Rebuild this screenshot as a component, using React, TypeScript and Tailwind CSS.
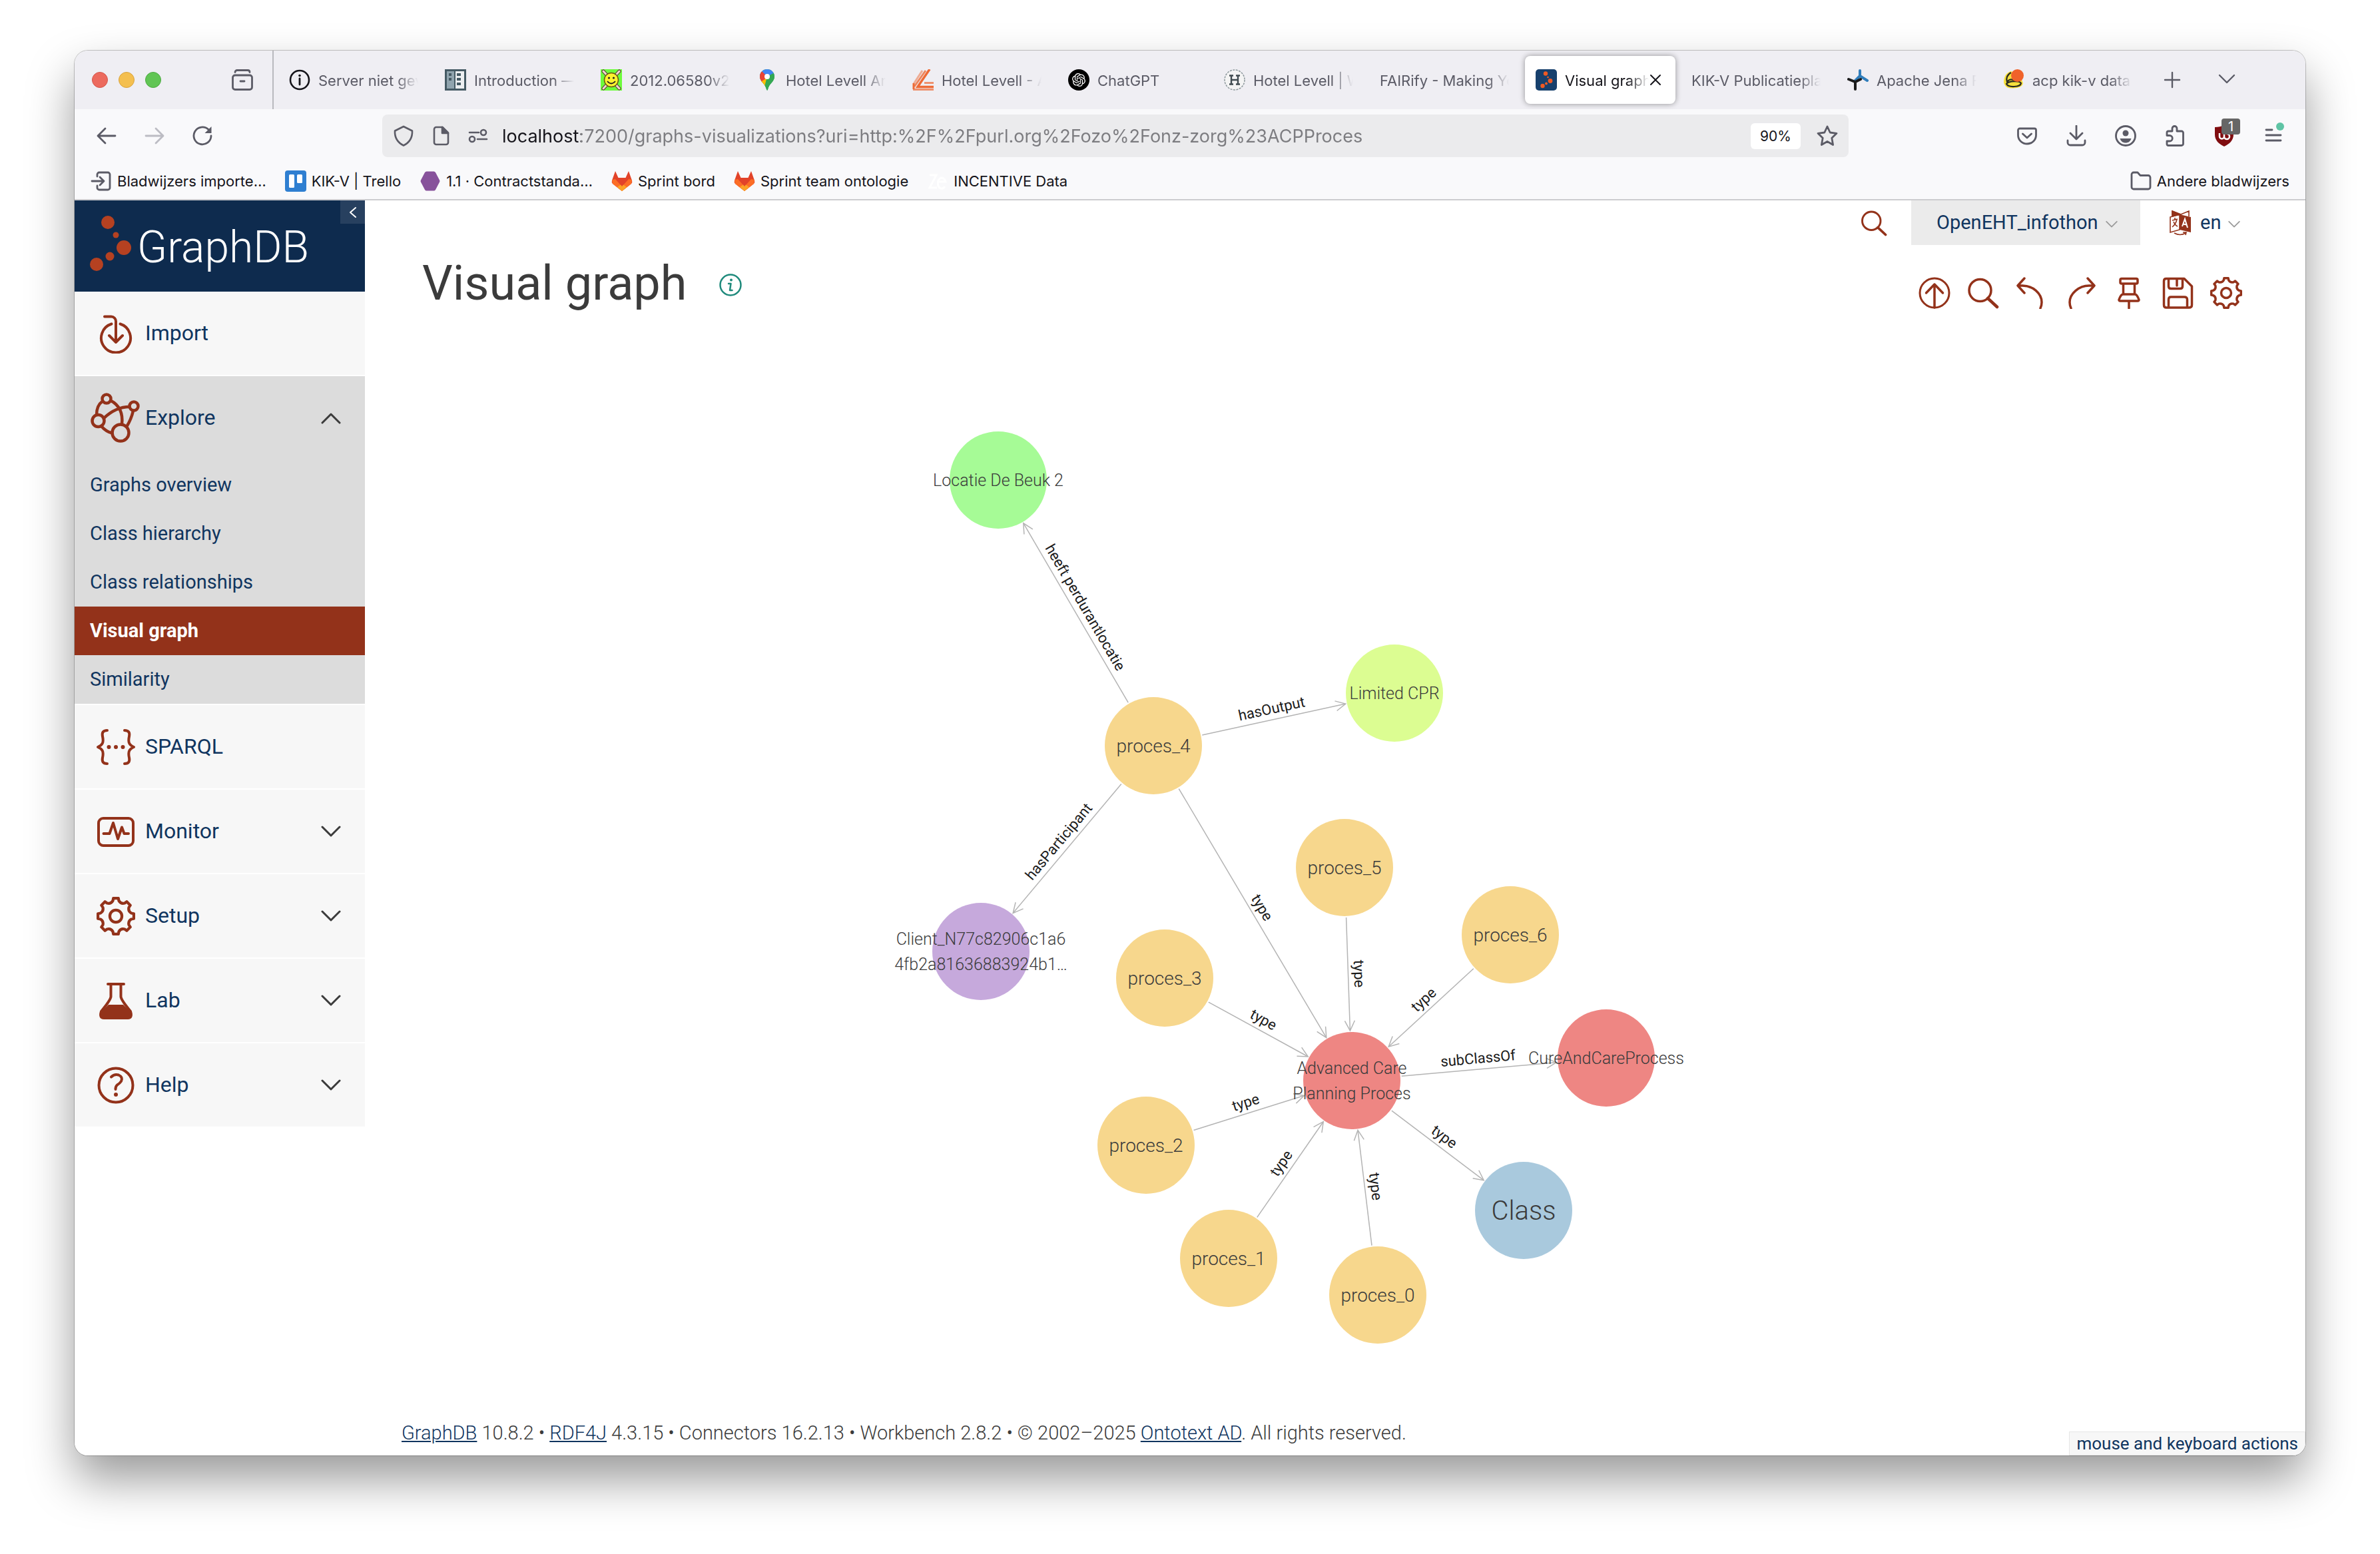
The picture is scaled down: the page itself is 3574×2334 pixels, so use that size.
import React from 'react';
import { SiOpenai } from 'react-icons/si';

type Children = { children: React.ReactNode };

/* ---------- Icon helpers ---------- */

const RUST = '#93321a';

function Stroke({ size = 'size-8', box = '0 0 32 32', width = 3, className = '', children }: Children & { size?: string; box?: string; width?: number; className?: string }) {
  return (
    <svg aria-hidden="true" viewBox={box} className={`${size} shrink-0 ${className}`} fill="none" stroke="currentColor" strokeWidth={width} strokeLinecap="round" strokeLinejoin="round">
      {children}
    </svg>
  );
}

function Chevron({ up = false, className }: { up?: boolean; className: string }) {
  return (
    <svg aria-hidden="true" viewBox="0 0 30 18" className={`shrink-0 ${className}`} fill="none" stroke="currentColor" strokeWidth="3" strokeLinecap="round" strokeLinejoin="round">
      <path d={up ? 'M2 16L15 3L28 16' : 'M2 2L15 15L28 2'} />
    </svg>
  );
}

function polar(r: number, deg: number) {
  const a = (deg * Math.PI) / 180;
  return `${(24 + r * Math.cos(a)).toFixed(2)} ${(24 + r * Math.sin(a)).toFixed(2)}`;
}

const gearPath =
  Array.from({ length: 8 }, (_, i) => {
    const a = i * 45;
    return `${i === 0 ? 'M' : 'L'}${polar(19.5, a - 11)}L${polar(22.5, a - 8)}L${polar(22.5, a + 8)}L${polar(19.5, a + 11)}A6.5 6.5 0 0 0 ${polar(19.5, a + 34)}`;
  }).join('') + 'Z';

function Gear({ size }: { size: string }) {
  return (
    <Stroke size={size} box="0 0 48 48" width={3.5}>
      <path d={gearPath} />
      <circle cx="24" cy="24" r="7.5" />
    </Stroke>
  );
}

/* ---------- Tab favicons ---------- */

const InfoFav = (
  <svg viewBox="0 0 32 32" className="size-8">
    <circle cx="16" cy="16" r="14" fill="none" stroke="#15141a" strokeWidth="2.6" />
    <path d="M16 14V23" stroke="#15141a" strokeWidth="2.8" strokeLinecap="round" />
    <circle cx="16" cy="9.5" r="1.8" fill="#15141a" />
  </svg>
);

const BuildingFav = (
  <svg viewBox="0 0 32 32" className="size-8">
    <rect width="32" height="32" fill="#455a64" />
    <rect x="3" y="3" width="11" height="26" fill="#90a4ae" />
    <rect x="16" y="3" width="13" height="26" fill="#eceff1" />
    <g fill="#455a64">
      <rect x="6" y="6" width="4" height="4" />
      <rect x="6" y="13" width="4" height="4" />
      <rect x="18" y="6" width="6" height="4" />
      <rect x="18" y="13" width="6" height="4" />
      <rect x="18" y="20" width="6" height="4" />
    </g>
  </svg>
);

const SmileyFav = (
  <svg viewBox="0 0 32 32" className="size-8">
    <rect width="32" height="32" fill="#6dfb3c" />
    <path d="M4 3L28 29M28 3L4 29" stroke="#5a3a30" strokeWidth="5" strokeLinecap="round" />
    <path d="M4 3L28 29M28 3L4 29" stroke="#f0d9cf" strokeWidth="3" strokeLinecap="round" />
    <circle cx="16" cy="16" r="10.5" fill="#fdf32f" stroke="#6b5a12" strokeWidth="1.5" />
    <circle cx="12.5" cy="13" r="1.6" fill="#222" />
    <circle cx="19.5" cy="13" r="1.6" fill="#222" />
    <path d="M10 18Q16 25 22 18" fill="none" stroke="#222" strokeWidth="1.8" />
  </svg>
);

const MapsFav = (
  <svg viewBox="0 0 32 32" className="size-8">
    <clipPath id="pin">
      <path d="M16 0C9.800 0 5 4.900 5 11C5 19 13 21 15 30.500Q16 33 17 30.500C19 21 27 19 27 11C27 4.900 22.200 0 16 0Z" />
    </clipPath>
    <g clipPath="url(#pin)">
      <rect width="32" height="34" fill="#34a853" />
      <path d="M0 0H32V4L16 18L4 8Z" fill="#4285f4" />
      <path d="M8 3L16 11L6 22L0 16V6Z" fill="#ea4335" />
      <path d="M14 14L24 10L12 28L5 20Z" fill="#fbbc04" />
      <path d="M27 5L16 11L12 26L18 34L32 20Z" fill="#34a853" />
    </g>
    <circle cx="16" cy="11" r="4" fill="#fff" />
  </svg>
);

const LevellFav = (
  <svg viewBox="0 0 32 32" className="size-8" fill="none" stroke="#ee6a35">
    <path d="M15 2L2 22" strokeWidth="3" opacity=".5" />
    <path d="M20 2L3 26" strokeWidth="3" opacity=".8" />
    <path d="M26 0L8 26.500H32" strokeWidth="3.500" />
    <path d="M18 20.500H32" strokeWidth="3" opacity=".7" />
    <path d="M1 30.500H32" strokeWidth="3" opacity=".7" />
    <path d="M2 21V30" strokeWidth="3" />
  </svg>
);

const ChatFav = (
  <span className="grid size-8 place-items-center rounded-full bg-black text-white">
    <SiOpenai className="size-5" />
  </span>
);

const HFav = (
  <svg viewBox="0 0 32 32" className="size-8">
    <circle cx="16" cy="16" r="15" fill="#f4f4f4" stroke="#8d989c" strokeWidth="1.500" strokeDasharray="3 1.500" />
    <path d="M8 9.500H14M18 9.500H24M8 22.500H14M18 22.500H24M11 10V22M21 10V22M11 16H21" stroke="#3f4a4f" strokeWidth="2.400" fill="none" />
  </svg>
);

const GraphFav = (
  <svg viewBox="0 0 32 32" className="size-8">
    <rect width="32" height="32" rx="5" fill="#17406d" />
    <g fill="#ef5a24">
      <circle cx="15" cy="6.500" r="3.200" />
      <circle cx="18.500" cy="12" r="1.300" />
      <circle cx="22" cy="17.500" r="3.400" />
      <circle cx="16" cy="21.500" r="1.900" />
      <circle cx="10.500" cy="25" r="3.200" />
    </g>
  </svg>
);

const JenaFav = (
  <svg viewBox="0 0 32 32" className="size-8" fill="none" strokeLinecap="round">
    <path d="M19 2V9M19 10L12 17M19 10L30 17" stroke="#2f7dbb" strokeWidth="4" />
    <path d="M2 15L12 19L20 15M12 19V30" stroke="#1b1b1b" strokeWidth="4" />
  </svg>
);

const AcpFav = (
  <svg viewBox="0 0 32 32" className="size-8">
    <path d="M12 3C4 5 1 12 1 20C3 28 9 29 16 28.500C24 28 29 26 30 21L26 10Z" fill="#f7e03c" />
    <path d="M12 5C6 8 4 14 6 19C10 14 15 14 18 19M5 22C9 17 25 17 27 21C26 27 8 28 5 22Z" fill="none" stroke="#2b2b20" strokeWidth="2.200" />
    <circle cx="21.500" cy="9.500" r="9.500" fill="#f0622a" />
  </svg>
);

const tabs: { title: string; icon?: React.ReactNode; active?: boolean }[] = [
  { title: 'Server niet gev', icon: InfoFav },
  { title: 'Introduction —', icon: BuildingFav },
  { title: '2012.06580v2', icon: SmileyFav },
  { title: 'Hotel Levell Am', icon: MapsFav },
  { title: 'Hotel Levell - A', icon: LevellFav },
  { title: 'ChatGPT', icon: ChatFav },
  { title: 'Hotel Levell | W', icon: HFav },
  { title: 'FAIRify - Making Yo' },
  { title: 'Visual graph', icon: GraphFav, active: true },
  { title: 'KIK-V Publicatiepla' },
  { title: 'Apache Jena F', icon: JenaFav },
  { title: 'acp kik-v data', icon: AcpFav },
];

function TabStrip() {
  return (
    <div className="flex h-[88px] items-center bg-[#efeef3] text-[#5b5b66]">
      <div className="flex h-full w-[299px] shrink-0 items-center border-r-2 border-[#b9b9be] pl-[26px]">
        <div className="flex gap-4">
          <button aria-label="Close window" className="size-6 rounded-full border border-[#d5564a] bg-[#ec6a5e]" />
          <button aria-label="Minimise window" className="size-6 rounded-full border border-[#d9a33d] bg-[#f4bf4f]" />
          <button aria-label="Zoom window" className="size-6 rounded-full border border-[#4caa41] bg-[#61c554]" />
        </div>
        <button aria-label="Recent tabs" className="ml-[106px]">
          <Stroke width={2.8}>
            <path d="M5 4.500C5 2.500 6.500 1.500 8 1.500H24C25.500 1.500 27 2.500 27 4.500M13 18H19" />
            <rect x="1.500" y="9" width="29" height="21.500" rx="3.500" />
          </Stroke>
        </button>
      </div>
      <nav aria-label="Tabs" className="ml-[7px] flex min-w-0 gap-2 text-[22px]">
        {tabs.map((t) => (
          <button
            key={t.title}
            className={
              t.active
                ? 'flex h-[72px] w-[226px] min-w-0 items-center rounded-lg bg-white px-4 text-left text-[#15141a] shadow-[0_0_8px_rgba(0,0,0,0.4)]'
                : 'flex h-[72px] w-[226px] min-w-0 items-center px-4 text-left'
            }
          >
            {t.icon && <span className="mr-3 shrink-0">{t.icon}</span>}
            <span className="min-w-0 flex-1 overflow-hidden whitespace-nowrap pt-0.5 leading-8 [mask-image:linear-gradient(90deg,#000_calc(100%-32px),transparent)]">{t.title}</span>
            {t.active && (
              <Stroke size="size-5" box="0 0 20 20" width={2} className="mr-1">
                <path d="M3 3L17 17M17 3L3 17" />
              </Stroke>
            )}
          </button>
        ))}
      </nav>
      <button aria-label="New tab" className="ml-[30px]">
        <Stroke size="size-7" box="0 0 28 28" width={2.4}>
          <path d="M14 3V25M3 14H25" />
        </Stroke>
      </button>
      <button aria-label="List all tabs" className="ml-[54px]">
        <Stroke size="size-7" box="0 0 28 28" width={2.4}>
          <path d="M3 7L14 18L25 7" />
        </Stroke>
      </button>
    </div>
  );
}

function NavBar() {
  return (
    <div className="flex h-20 items-center bg-[#f9f9fb] text-[#5b5b66]">
      <div className="flex w-[462px] shrink-0 gap-10 pl-8">
        <button aria-label="Back">
          <Stroke width={2.8}>
            <path d="M29 16H3M14 5L3 16L14 27" />
          </Stroke>
        </button>
        <button aria-label="Forward" disabled className="text-[#bcbcc3]">
          <Stroke width={2.8}>
            <path d="M3 16H29M18 5L29 16L18 27" />
          </Stroke>
        </button>
        <button aria-label="Reload">
          <Stroke width={2.8}>
            <path d="M29 16A13 13 0 1 1 25 6.500" />
            <path d="M29.500 2V12H19.500Z" fill="currentColor" stroke="none" />
          </Stroke>
        </button>
      </div>
      <div className="flex h-16 w-[2202px] items-center rounded-lg bg-[#ebebed] pl-4 pr-4">
        <Stroke width={2.6}>
          <path d="M16 2L29 8.500C29.500 18 25 26 16 30.500C7 26 2.500 18 3 8.500Z" />
        </Stroke>
        <Stroke className="ml-6" width={2.6}>
          <path d="M9 3H18.500L27 11.500V26A3 3 0 0 1 24 29H9A3 3 0 0 1 6 26V6A3 3 0 0 1 9 3Z" />
          <path d="M18 3V12H27Z" fill="currentColor" />
        </Stroke>
        <Stroke className="ml-6" width={2.6}>
          <path d="M3 11H17M15 21H29" />
          <circle cx="24" cy="11" r="4" />
          <circle cx="7" cy="21" r="4" />
        </Stroke>
        <input
          aria-label="Address"
          readOnly
          value="localhost:7200/graphs-visualizations?uri=http:%2F%2Fpurl.org%2Fozo%2Fonz-zorg%23ACPProces"
          className="ml-5 min-w-0 flex-1 bg-[linear-gradient(90deg,#15141a_118px,#7c7c80_118px)] bg-clip-text pt-0.5 text-[27px] text-transparent outline-none"
        />
        <button className="rounded-md bg-white px-3.5 text-[21px] leading-[39px] text-[#15141a]">90%</button>
        <button aria-label="Bookmark this page" className="ml-6">
          <Stroke width={2.8}>
            <path d="M16 2L20.200 11L30 12.300L22.800 19.200L24.600 29.500L16 24.500L7.400 29.500L9.200 19.200L2 12.300L11.800 11Z" />
          </Stroke>
        </button>
      </div>
      <div className="ml-auto flex items-center gap-[42px] pr-8">
        <button aria-label="Save to Pocket">
          <Stroke width={2.8}>
            <path d="M5 5H27A2.500 2.500 0 0 1 29.500 7.500V15A13.500 13 0 0 1 2.500 15V7.500A2.500 2.500 0 0 1 5 5ZM9.500 13L16 19L22.500 13" />
          </Stroke>
        </button>
        <button aria-label="Downloads">
          <Stroke width={2.8}>
            <path d="M16 1V20M7 12L16 21L25 12M3 23V26A4 4 0 0 0 7 30H25A4 4 0 0 0 29 26V23" />
          </Stroke>
        </button>
        <button aria-label="Account">
          <Stroke width={2.8}>
            <circle cx="16" cy="16" r="14.500" />
            <circle cx="16" cy="12" r="4.500" fill="currentColor" stroke="none" />
            <path d="M7.500 20H24.500C23 24.500 20 26.500 16 26.500C12 26.500 9 24.500 7.500 20Z" fill="currentColor" stroke="none" />
          </Stroke>
        </button>
        <button aria-label="Extensions">
          <Stroke width={2.8}>
            <path d="M4 14V11A2 2 0 0 1 6 9H12V5A3.500 3.500 0 0 1 19 5V9H26A2.500 2.500 0 0 1 28.500 11.500V28A2.500 2.500 0 0 1 26 30.500H6A2 2 0 0 1 4 28.500V24H8A4 4 0 0 0 8 15.500H4Z" />
          </Stroke>
        </button>
        <button aria-label="Content blocker, 1 request blocked" className="relative">
          <svg viewBox="0 0 32 32" className="size-8">
            <path d="M16 0C12 2 7 3 2 3V14C2 23 8 28 16 32C24 28 30 23 30 14V3C25 3 20 2 16 0Z" fill="#800d10" />
            <path d="M9 12V17A3.500 3.500 0 0 0 16 17V13M16 17A4 4 0 1 0 20 13" fill="none" stroke="#fff" strokeWidth="2.500" />
          </svg>
          <span className="absolute -right-2 -top-2.5 w-7 rounded-sm bg-[#666] text-center text-[20px] leading-6 text-white">1</span>
        </button>
        <button aria-label="Open menu" className="relative">
          <Stroke width={2.8}>
            <path d="M5 7H14M5 15H27M5 23H27" />
          </Stroke>
          <span className="absolute right-0 -top-1 size-3 rounded-full bg-[#5fc4a5]" />
        </button>
      </div>
    </div>
  );
}

function Gitlab() {
  return (
    <svg aria-hidden="true" viewBox="0 0 32 32" className="size-8">
      <path d="M6 1L1 15Q0 18 2 20L16 31L30 20Q32 18 31 15L26 1L21.500 11H10.500Z" fill="#e24329" />
      <path d="M1 14L2 20L16 31L30 20L31 14L26 13L16 24L6 13Z" fill="#fc6d26" />
      <path d="M16 20L9 25L16 31L23 25Z" fill="#fca326" />
      <path d="M6 11L16 24L26 11Z" fill="#e24329" />
    </svg>
  );
}

const bookmarks = [
  {
    label: 'Bladwijzers importe…',
    icon: (
      <Stroke width={2.8} className="text-[#5b5b66]">
        <path d="M10 9V6A3 3 0 0 1 13 3H26A3 3 0 0 1 29 6V26A3 3 0 0 1 26 29H13A3 3 0 0 1 10 26V23M2 16H20M14 10L20 16L14 22" />
      </Stroke>
    ),
  },
  {
    label: 'KIK-V | Trello',
    icon: (
      <svg viewBox="0 0 32 32" className="size-8">
        <rect width="32" height="32" rx="4" fill="#2f7fd1" />
        <rect x="6" y="6" width="8" height="20" rx="1.500" fill="#fff" />
        <rect x="18" y="6" width="8" height="13" rx="1.500" fill="#fff" />
      </svg>
    ),
  },
  {
    label: '1.1 · Contractstanda…',
    icon: (
      <svg viewBox="0 0 32 32" className="size-8">
        <path d="M10.500 1.500H21.500Q23 1.500 24 3L30 14.500Q31 16 30 17.500L24 29Q23 30.500 21.500 30.500H10.500Q9 30.500 8 29L2 17.500Q1 16 2 14.500L8 3Q9 1.500 10.500 1.500Z" fill="#87529b" />
      </svg>
    ),
  },
  { label: 'Sprint bord', icon: <Gitlab /> },
  { label: 'Sprint team ontologie', icon: <Gitlab /> },
  {
    label: 'INCENTIVE Data',
    icon: (
      <svg viewBox="0 0 32 32" className="size-8" fill="none" stroke="#fff" strokeWidth="3">
        <path d="M4 7H14L4 26H15M17 17H28A6 8 0 1 0 27 24" />
      </svg>
    ),
  },
];

function BookmarksBar() {
  return (
    <div className="flex h-[57px] items-center justify-between border-b-2 border-[#cccccf] bg-[#f9f9fb] pl-6 pr-6 text-[22px] text-[#15141a]">
      <div className="flex gap-7">
        {bookmarks.map((b) => (
          <a key={b.label} href="#bookmark" className="flex items-center gap-2 whitespace-nowrap">
            {b.icon}
            <span className="pt-0.5">{b.label}</span>
          </a>
        ))}
      </div>
      <a href="#bookmarks" className="flex items-center gap-2 whitespace-nowrap">
        <Stroke width={2.8} className="text-[#5b5b66]">
          <path d="M5 3H11L15 7.500H27A3 3 0 0 1 30 10.500V25A3 3 0 0 1 27 28H5A3 3 0 0 1 2 25V6A3 3 0 0 1 5 3Z" />
        </Stroke>
        <span className="pt-0.5">Andere bladwijzers</span>
      </a>
    </div>
  );
}

/* ---------- Sidebar ---------- */

const menuIcons: Record<string, React.ReactNode> = {
  Import: (
    <Stroke size="size-[60px]" box="0 0 60 60" width={4}>
      <path d="M13 4.500H23A7 7 0 0 1 30 11.500V43M20 33L30 43L40 33M23.500 15.500A22 22 0 1 0 36.500 15.500" />
    </Stroke>
  ),
  Explore: (
    <Stroke size="size-20" box="0 0 80 80" width={4.500}>
      <circle cx="26" cy="11" r="6.500" />
      <circle cx="67" cy="22" r="6.500" />
      <circle cx="13.500" cy="44" r="9" />
      <circle cx="47" cy="62" r="12.500" />
      <path d="M20 14.500Q11 21 11 35M32 13.500Q52 24 49 49.500M22 40Q40 23 60.500 23M66 29Q63 42 56 53M18 52Q26 61 34.500 62.500" />
    </Stroke>
  ),
  SPARQL: (
    <Stroke size="size-[60px]" box="0 0 60 60" width={4}>
      <path d="M17 5C10 5 9 9 10 14C12 23 10 27 3 30C10 33 12 37 10 46C9 51 10 55 17 55M43 5C50 5 51 9 50 14C48 23 50 27 57 30C50 33 48 37 50 46C51 51 50 55 43 55" />
      <path d="M19.500 30H19.510M30 30H30.010M40.500 30H40.510" strokeWidth="6" />
    </Stroke>
  ),
  Monitor: (
    <Stroke size="size-[60px]" box="0 0 60 60" width={4}>
      <rect x="4" y="10" width="52" height="41" rx="7" />
      <path d="M11.500 33H20.500L26 17L33 41L39 23.500L42.500 33H49" />
    </Stroke>
  ),
  Setup: <Gear size="size-[58px]" />,
  Lab: (
    <Stroke size="size-[60px]" box="0 0 60 60" width={4}>
      <path d="M18 5H42M22.500 5V24Q22 29 8 46Q5 56 12 56H48Q55 56 52 46Q38 29 37.500 24V5" />
      <path d="M19 36H41L54 49Q54 56 48 57H12Q6 56 6 49Z" fill="currentColor" stroke="none" />
    </Stroke>
  ),
  Help: (
    <Stroke size="size-[60px]" box="0 0 60 60" width={4}>
      <circle cx="30" cy="30" r="25.500" />
      <path d="M23 17.500Q28 12.500 34 14.500Q41 17.500 38 24Q36 27 32 29.500Q29.500 31.500 29.500 36" />
      <path d="M30 44V44.010" strokeWidth="6" />
    </Stroke>
  ),
};

function MenuHeader({ label, expand }: { label: string; expand?: 'up' | 'down' }) {
  return (
    <button className="flex h-[125px] w-full items-center pl-[18px] pr-9 text-left text-[32px] text-[#10355f]">
      <span className="grid w-[88px] shrink-0 justify-items-center text-[#93321a]">{menuIcons[label]}</span>
      <span className="flex-1 pb-0.5 leading-10">{label}</span>
      {expand && <Chevron up={expand === 'up'} className="h-[18px] w-[30px] text-[#3b3b3b]" />}
    </button>
  );
}

const exploreItems = ['Graphs overview', 'Class hierarchy', 'Class relationships', 'Visual graph', 'Similarity'];

function Sidebar() {
  return (
    <aside className="w-[436px] shrink-0">
      <div className="relative h-[137px] bg-[#0e2b4e]">
        <a href="#home" aria-label="GraphDB home" className="flex h-full items-center">
          <svg aria-hidden="true" viewBox="0 0 94 137" className="h-full w-[94px]" fill="#b54121">
            <circle cx="50" cy="33" r="10" />
            <circle cx="62" cy="52" r="4.500" />
            <circle cx="74" cy="71" r="11" />
            <circle cx="53" cy="84" r="6.500" />
            <circle cx="33" cy="96" r="10" />
          </svg>
          <span className="pt-1 text-[66px] font-light text-white">GraphDB</span>
        </a>
        <button aria-label="Collapse menu" className="absolute right-0 top-0 grid h-[35px] w-[37px] place-items-center bg-[#27405f] text-white">
          <Stroke size="size-5" box="0 0 20 20" width={2}>
            <path d="M14 3L6 10L14 17" />
          </Stroke>
        </button>
      </div>
      <nav aria-label="Main menu">
        <div className="border-b-2 border-white bg-[#f7f7f7]">
          <MenuHeader label="Import" />
        </div>
        <div className="border-b-2 border-white bg-[#dcdcdc]">
          <MenuHeader label="Explore" expand="up" />
          <ul className="pt-0.5">
            {exploreItems.map((item) => (
              <li key={item}>
                <a
                  href="#explore"
                  className={
                    item === 'Visual graph'
                      ? 'block bg-[#93321a] pl-[23px] text-[29px] font-bold leading-[73px] text-white'
                      : 'block pl-[23px] text-[29px] leading-[73px] text-[#10355f]'
                  }
                >
                  {item}
                </a>
              </li>
            ))}
          </ul>
        </div>
        <div className="border-b-2 border-white bg-[#f7f7f7]">
          <MenuHeader label="SPARQL" />
        </div>
        {['Monitor', 'Setup', 'Lab', 'Help'].map((label) => (
          <div key={label} className="border-b-2 border-white bg-[#f7f7f7]">
            <MenuHeader label={label} expand="down" />
          </div>
        ))}
      </nav>
    </aside>
  );
}

/* ---------- Graph ---------- */

const ORANGE = '#f7d78d';

const nodes: Record<string, { x: number; y: number; fill: string; size: number; lines: string[] }> = {
  loc: { x: 1499, y: 721, fill: '#a6fb96', size: 25, lines: ['Locatie De Beuk 2'] },
  cpr: { x: 2094, y: 1041, fill: '#dcfd92', size: 25, lines: ['Limited CPR'] },
  client: { x: 1473, y: 1429, fill: '#c6a9dc', size: 25, lines: ['Client_N77c82906c1a6', '4fb2a81636883924b1…'] },
  p4: { x: 1732, y: 1120, fill: ORANGE, size: 28, lines: ['proces_4'] },
  p5: { x: 2019, y: 1303, fill: ORANGE, size: 28, lines: ['proces_5'] },
  p3: { x: 1749, y: 1469, fill: ORANGE, size: 28, lines: ['proces_3'] },
  p6: { x: 2268, y: 1404, fill: ORANGE, size: 28, lines: ['proces_6'] },
  p2: { x: 1721, y: 1720, fill: ORANGE, size: 28, lines: ['proces_2'] },
  p1: { x: 1845, y: 1890, fill: ORANGE, size: 28, lines: ['proces_1'] },
  p0: { x: 2069, y: 1945, fill: ORANGE, size: 28, lines: ['proces_0'] },
  acp: { x: 2030, y: 1623, fill: '#ee8683', size: 25, lines: ['Advanced Care', 'Planning Proces'] },
  cure: { x: 2412, y: 1589, fill: '#ee8683', size: 25, lines: ['CureAndCareProcess'] },
  cls: { x: 2288, y: 1818, fill: '#a9c9dd', size: 40, lines: ['Class'] },
};

const edges: [string, string, string][] = [
  ['p4', 'loc', 'heeft perdurantlocatie'],
  ['p4', 'cpr', 'hasOutput'],
  ['p4', 'client', 'hasParticipant'],
  ['p4', 'acp', 'type'],
  ['p5', 'acp', 'type'],
  ['p6', 'acp', 'type'],
  ['p3', 'acp', 'type'],
  ['p2', 'acp', 'type'],
  ['p1', 'acp', 'type'],
  ['p0', 'acp', 'type'],
  ['acp', 'cls', 'type'],
  ['acp', 'cure', 'subClassOf'],
];

function Edge({ from, to, label }: { from: string; to: string; label: string }) {
  const a = nodes[from];
  const b = nodes[to];
  const length = Math.hypot(b.x - a.x, b.y - a.y);
  const angle = (Math.atan2(b.y - a.y, b.x - a.x) * 180) / Math.PI;
  const upright = angle > 90 ? angle - 180 : angle < -90 ? angle + 180 : angle;
  return (
    <g>
      <g transform={`translate(${a.x} ${a.y}) rotate(${angle})`} fill="none" stroke="#b4b4b4">
        <path d={`M75 0H${length - 76}`} strokeWidth="1.500" />
        <path d={`M${length - 90} -7.500L${length - 75} 0L${length - 90} 7.500`} strokeWidth="1.500" />
      </g>
      <text transform={`translate(${(a.x + b.x) / 2} ${(a.y + b.y) / 2}) rotate(${upright})`} y="-9" textAnchor="middle" className="fill-[#1b1b1b] text-[22px]">
        {label}
      </text>
    </g>
  );
}

function Graph() {
  return (
    <svg role="img" aria-label="Graph of Advanced Care Planning Proces" viewBox="548 464 2914 1668" className="min-h-0 w-full flex-1">
      {Object.entries(nodes).map(([id, n]) => (
        <circle key={id} cx={n.x} cy={n.y} r="73" fill={n.fill} />
      ))}
      {edges.map(([from, to, label]) => (
        <Edge key={from + to} from={from} to={to} label={label} />
      ))}
      {Object.entries(nodes).map(([id, n]) => (
        <text key={id} textAnchor="middle" fontSize={n.size} className="fill-[#3b3b3b] font-light">
          {n.lines.map((line, i) => (
            <tspan key={line} x={n.x} y={n.y + (i - (n.lines.length - 1) / 2) * 38 + Math.round(n.size * 0.35)}>
              {line}
            </tspan>
          ))}
        </text>
      ))}
    </svg>
  );
}

/* ---------- Main area ---------- */

function SearchIcon({ size }: { size: string }) {
  return (
    <Stroke size={size} box="0 0 48 48" width={3.5}>
      <circle cx="19.500" cy="20" r="16.500" />
      <path d="M31 32L45 45" strokeWidth="4.500" />
    </Stroke>
  );
}

const tools: { label: string; icon: React.ReactNode }[] = [
  {
    label: 'Publish',
    icon: (
      <Stroke size="size-12" box="0 0 48 48" width={3}>
        <circle cx="24" cy="24" r="22" />
        <path d="M24 46V11M11.500 24L24 11L36.500 24" strokeWidth="3.500" />
      </Stroke>
    ),
  },
  { label: 'Search', icon: <SearchIcon size="size-12" /> },
  {
    label: 'Undo',
    icon: (
      <Stroke size="size-12" box="0 0 48 48" width={3.500}>
        <path d="M13 2L3 13L13 24M3 13H10C26 13 39 25 39 38Q39 43 37 47" />
      </Stroke>
    ),
  },
  {
    label: 'Redo',
    icon: (
      <Stroke size="size-12" box="0 0 48 48" width={3.500}>
        <path d="M35 2L45 13L35 24M45 13H37C22 13 8 25 8 38Q8 43 10 47" />
      </Stroke>
    ),
  },
  {
    label: 'Pin',
    icon: (
      <Stroke size="size-12" box="0 0 48 48" width={3.500}>
        <path d="M13 2.500H35Q37 2.500 37 4.500V8Q37 10 35 10H13Q11 10 11 8V4.500Q11 2.500 13 2.500ZM15.500 10V26M32.500 10V26M15 26H33Q36 26 39 34Q39 36 37 36H11Q9 36 9 34Q12 26 15 26ZM24 37V47" />
      </Stroke>
    ),
  },
  {
    label: 'Save',
    icon: (
      <Stroke size="size-12" box="0 0 48 48" width={3.500}>
        <path d="M34 2.500H7Q3.500 2.500 3.500 6V42Q3.500 46 7 46H41Q45.500 46 45.500 42V14ZM10.500 3V14Q10.500 17.500 14 17.500H28Q31.500 17.500 31.500 14V3M23 3V13M10.500 46V34Q10.500 30 14 30H34Q38.500 30 38.500 34V46" />
      </Stroke>
    ),
  },
  { label: 'Settings', icon: <Gear size="size-12" /> },
];

function LanguageIcon() {
  return (
    <svg aria-hidden="true" viewBox="0 0 32 38" className="h-[38px] w-8" fill="none" stroke={RUST} strokeWidth="1.600">
      <path d="M4 1L17 6L29 1V9M4 8V1L14 7" />
      <path d="M4 1L16 6L4 9Z" fill={RUST} />
      <path d="M1 10L15 6V29L1 33Z" />
      <path d="M15 6L32 10V33L15 29Z" fill={RUST} stroke="none" />
      <path d="M4 15L12 13M8 11V14M11 14Q9 21 4 25M6 17Q8 22 12 24" />
      <path d="M19 24L23 13L27 26M20.500 20.500L25.500 21.500" stroke="#fff" strokeWidth="2" />
      <path d="M7 34Q16 39 24 34M20 33L25 33L24 37" />
    </svg>
  );
}

function Main() {
  return (
    <main className="relative flex min-w-0 flex-1 flex-col bg-white">
      <div className="flex h-[67px] items-center justify-end pr-[98px] text-[29px] text-[#10355f]">
        <button aria-label="Search RDF resources" className="mr-9 text-[#93321a]">
          <SearchIcon size="size-10" />
        </button>
        <div className="relative mr-11 h-full">
          <select aria-label="Repository" className="h-full w-[344px] appearance-none bg-[#ebebeb] pl-[38px] outline-none">
            <option>OpenEHT_infothon</option>
          </select>
          <Chevron className="pointer-events-none absolute right-[34px] top-[30px] h-3 w-[18px] text-[#9b9b9b]" />
        </div>
        <LanguageIcon />
        <div className="relative">
          <select aria-label="Language" className="h-[67px] w-[74px] appearance-none bg-transparent pl-3.5 outline-none">
            <option>en</option>
          </select>
          <Chevron className="pointer-events-none absolute right-0 top-[30px] h-3 w-[18px] text-[#9b9b9b]" />
        </div>
      </div>
      <div className="mt-5 flex items-end justify-between pl-[86px] pr-[95px]">
        <div className="flex items-center gap-12">
          <h1 className="text-[72px] font-normal leading-[76px] text-[#3b3b3b]">Visual graph</h1>
          <button aria-label="About this page" className="mt-1 text-[#1f8a7c]">
            <Stroke size="size-9" box="0 0 36 36" width={2.500}>
              <circle cx="18" cy="18" r="15.500" />
              <path d="M15 16H18.500L17 26H20.500" />
              <path d="M19 10.500V10.510" strokeWidth="4" />
            </Stroke>
          </button>
        </div>
        <div className="flex gap-[25px] text-[#93321a]">
          {tools.map((t) => (
            <button key={t.label} aria-label={t.label}>
              {t.icon}
            </button>
          ))}
        </div>
      </div>
      <Graph />
      <footer className="pb-3.5 pl-[55px] text-[29px] font-light leading-10 text-[#3b3b3b]">
        <a href="#graphdb" className="text-[#10355f] underline">GraphDB</a> 10.8.2 • <a href="#rdf4j" className="text-[#10355f] underline">RDF4J</a> 4.3.15 • Connectors 16.2.13 • Workbench 2.8.2 • © 2002–2025{' '}
        <a href="#ontotext" className="text-[#10355f] underline">Ontotext AD</a>. All rights reserved.
      </footer>
      <button className="absolute bottom-0 right-0 border border-[#e6e6e6] bg-[#f7f7f7] px-2.5 text-[26px] leading-[34px] text-[#10355f]">mouse and keyboard actions</button>
    </main>
  );
}

export default function App() {
  return (
    <div className="flex min-h-screen bg-white px-[112px] pb-[148px] pt-[76px] font-['Roboto',sans-serif]">
      <div className="flex min-w-0 flex-1 flex-col overflow-hidden rounded-[20px] shadow-[0_0_0_1px_rgba(0,0,0,0.22),0_36px_70px_rgba(0,0,0,0.4)]">
        <header className="font-['Inter',sans-serif]">
          <TabStrip />
          <NavBar />
          <BookmarksBar />
        </header>
        <div className="flex flex-1 bg-white">
          <Sidebar />
          <Main />
        </div>
      </div>
    </div>
  );
}
